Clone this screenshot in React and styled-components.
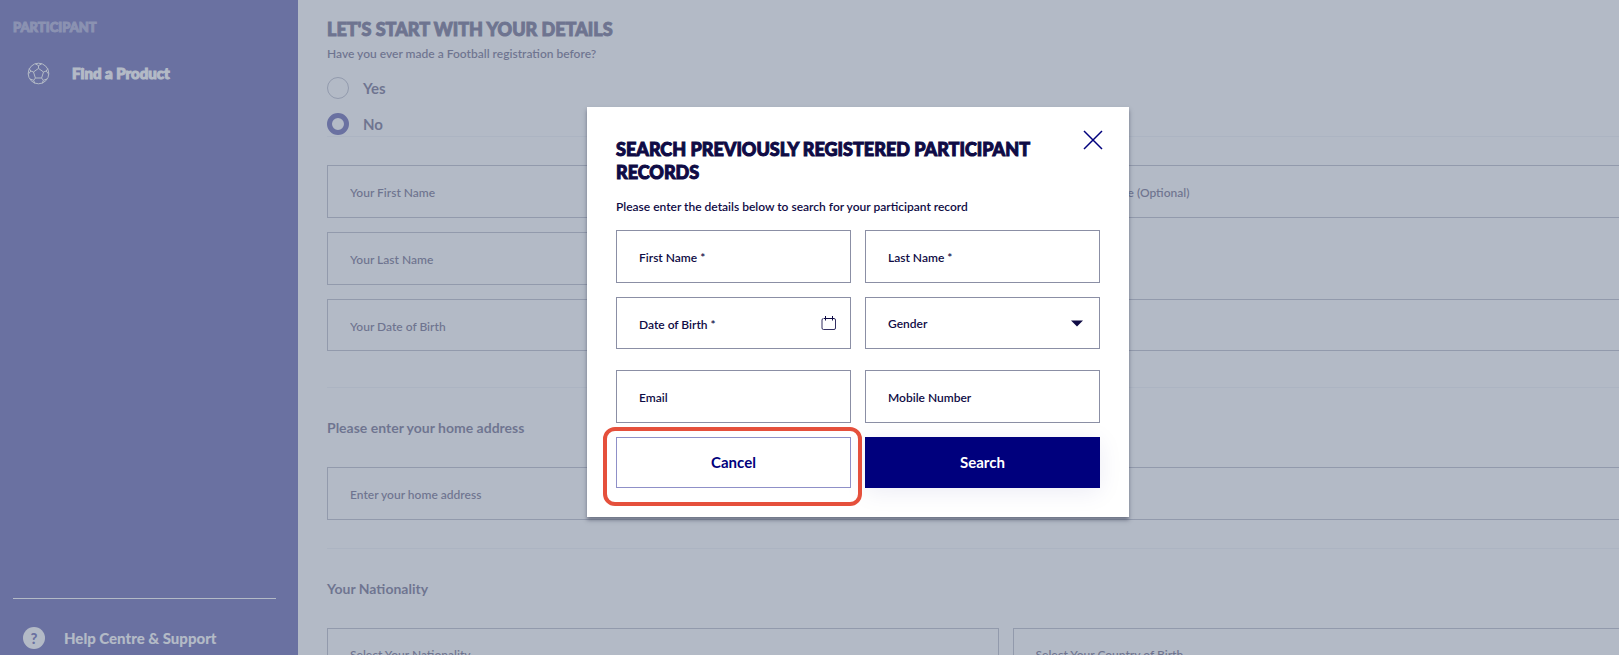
import React from "react";
import styled, { createGlobalStyle } from "styled-components";

const GlobalStyle = createGlobalStyle`
  * {
    box-sizing: border-box;
  }
  body {
    margin: 0;
    font-family: Lato, "Open Sans", sans-serif;
    font-size: 12px;
    color: #0f0b45;
  }
  input, select, button {
    font-family: inherit;
  }
`;

const Viewport = styled.div`
  height: 100vh;
  overflow: hidden;
`;

// The registration page runs a little past the right side of the window
const Page = styled.div`
  position: relative;
  display: flex;
  width: calc(100% + 97px);
  height: 100%;
  overflow: hidden;
  background: #fdfdff;
`;

const Sidebar = styled.nav`
  flex: 0 0 298px;
  display: flex;
  flex-direction: column;
  justify-content: space-between;
  padding: 18px 22px 5px 13px;
  background: #00007d;
`;

const SidebarTitle = styled.p`
  margin: 0 0 25px;
  font-size: 13px;
  line-height: 18px;
  font-weight: 900;
  color: #7374b7;
  -webkit-text-stroke: 1px currentColor;
`;

const SidebarLink = styled.a`
  display: flex;
  align-items: center;
  gap: ${(props) => props.$gap};
  padding-left: ${(props) => props.$indent};
  font-size: 15px;
  font-weight: 900;
  line-height: 24px;
  color: #fff;
  text-decoration: none;
`;

const HeavyText = styled.span`
  -webkit-text-stroke: 1px currentColor;
`;

const SidebarFooter = styled.div`
  padding-top: 27px;
  border-top: 1px solid #fff;
`;

const HelpBadge = styled.span`
  width: 22px;
  height: 22px;
  border-radius: 50%;
  background: #fff;
  color: #00007d;
  font-size: 15px;
  line-height: 22px;
  text-align: center;
`;

const Main = styled.main`
  flex: 1;
  min-width: 0;
  padding: 18px 32px 0 29px;
`;

const PageTitle = styled.h1`
  margin: 0;
  font-size: 18px;
  line-height: 22px;
  font-weight: 900;
  -webkit-text-stroke: 1px currentColor;
`;

const Question = styled.p`
  margin: 4px 0 12px;
  font-size: 12px;
  font-weight: 600;
  line-height: 20px;
`;

const RadioLabel = styled.label`
  display: flex;
  align-items: center;
  gap: 14px;
  height: 24px;
  margin-bottom: ${(props) => (props.$last ? "0" : "12px")};
  font-size: 15px;
  font-weight: 700;
`;

const Radio = styled.input`
  appearance: none;
  width: 22px;
  height: 22px;
  margin: 0;
  border: 1px solid #8b8fa5;
  border-radius: 50%;
  &:checked {
    border: 5px solid #00007d;
  }
`;

const Divider = styled.hr`
  margin: 0;
  border: 0;
  border-top: 1px solid #e6e8f0;
`;

const SectionTitle = styled.h2`
  margin: 28px 0;
  font-size: 14px;
  line-height: 23px;
  font-weight: 700;
`;

const Grid = styled.div`
  display: grid;
  grid-template-columns: repeat(2, minmax(0, 1fr));
  gap: 14px;
  padding: ${(props) => props.$padding || "0"};
`;

const Field = styled.div`
  display: flex;
  align-items: center;
  height: ${(props) => (props.$short ? "52px" : "53px")};
  border: 1px solid #8b8fa5;
  background: #fff;
  grid-column: ${(props) => (props.$wide ? "1 / -1" : props.$first ? "1" : "auto")};
  padding-right: ${(props) => (props.$icon ? "14px" : "0")};
`;

const Input = styled.input`
  flex: 1;
  min-width: 0;
  height: 100%;
  padding: 2px 22px 0;
  border: 0;
  outline: 0;
  background: none;
  font-size: 12px;
  font-weight: 600;
  color: inherit;
  &::placeholder {
    color: #0f0b45;
    opacity: 1;
  }
`;

const Select = styled.select`
  flex: 1;
  min-width: 0;
  height: 100%;
  padding: 0 22px;
  border: 0;
  outline: 0;
  appearance: none;
  background: none;
  font-size: 12px;
  font-weight: 600;
  color: inherit;
`;

const Overlay = styled.div`
  position: absolute;
  inset: 0;
  display: flex;
  justify-content: center;
  align-items: flex-start;
  padding-top: 107px;
  background: rgba(148, 158, 175, 0.714);
`;

const Dialog = styled.section`
  width: 542px;
  padding: 23px 29px 29px;
  background: #fff;
  box-shadow: 0 3px 4px rgba(40, 45, 70, 0.5);
`;

const DialogHeader = styled.header`
  display: flex;
  align-items: flex-start;
  justify-content: space-between;
  margin-right: -3px;
`;

const DialogTitle = styled.h2`
  max-width: 430px;
  margin: 8px 0 0;
  font-size: 18px;
  line-height: 23px;
  font-weight: 900;
  -webkit-text-stroke: 1px currentColor;
`;

const CloseButton = styled.button`
  display: flex;
  margin: 0;
  padding: 0;
  border: 0;
  background: none;
  color: #00007d;
`;

const DialogText = styled.p`
  margin: 12px 0;
  font-size: 12px;
  font-weight: 600;
  line-height: 22px;
`;

const Button = styled.button`
  width: 100%;
  height: 51px;
  padding: 0 0 2px;
  border: 1px solid ${(props) => (props.$primary ? "#00007d" : "#8f90c8")};
  background: ${(props) => (props.$primary ? "#00007d" : "#fff")};
  color: ${(props) => (props.$primary ? "#fff" : "#00007d")};
  box-shadow: ${(props) => (props.$primary ? "0 4px 24px rgba(0, 0, 125, 0.08)" : "none")};
  font-size: 15px;
  font-weight: 700;
`;

const Highlight = styled.div`
  position: relative;
  z-index: 1;
  &::after {
    content: "";
    position: absolute;
    inset: -10px -11px -18px -13px;
    border: 4px solid #e5503c;
    border-radius: 12px;
    pointer-events: none;
  }
`;

function BallIcon() {
  return (
    <svg width="23" height="23" viewBox="0 0 23 23" fill="none" stroke="currentColor" strokeWidth="1">
      <circle cx="11.5" cy="11.5" r="10.3" />
      <path d="M11.5 6.4l5 3.6-1.9 6H8.4l-1.9-6z" />
      <path d="M11.5 6.4V3.6M8.3 1.8l3.2 1.8 3.2-1.8M16.5 10l2.7-1M20.9 6.6l-1.7 2.4 2.5 3.2M14.6 16l1.7 2.3M20.1 17l-3.8 1.3-1 3M8.4 16l-1.7 2.3M2.9 17l3.8 1.3 1 3M6.5 10L3.8 9M2.1 6.6L3.8 9l-2.5 3.2" />
    </svg>
  );
}

function CalendarIcon() {
  return (
    <svg width="15" height="15" viewBox="0 0 15 15" fill="none" stroke="currentColor">
      <path d="M4.5 0v4.5M11.5 0v4.5M3 2.5h10" />
      <path d="M2.5 2.5Q1 2.5 1 4v8q0 1.5 1.5 1.5h10.5q1.5 0 1.5-1.5V4q0-1.5-1.5-1.5" strokeOpacity=".85" />
    </svg>
  );
}

function CaretIcon() {
  return (
    <svg width="15" height="7" viewBox="0 0 15 7" fill="currentColor">
      <path d="M1 .5h12L7 6.5z" />
    </svg>
  );
}

function CloseIcon() {
  return (
    <svg width="20" height="20" viewBox="0 0 20 20" fill="none" stroke="currentColor" strokeWidth="1.5">
      <path d="M1 1l18 18M19 1L1 19" />
    </svg>
  );
}

function TextField({ label, ...rest }) {
  return (
    <Field {...rest}>
      <Input type="text" placeholder={label} aria-label={label} />
    </Field>
  );
}

function SearchDialog() {
  return (
    <Dialog role="dialog" aria-labelledby="search-title">
      <DialogHeader>
        <DialogTitle id="search-title">
          SEARCH PREVIOUSLY REGISTERED PARTICIPANT RECORDS
        </DialogTitle>
        <CloseButton type="button" aria-label="Close">
          <CloseIcon />
        </CloseButton>
      </DialogHeader>
      <DialogText>
        Please enter the details below to search for your participant record
      </DialogText>
      <Grid>
        <TextField label="First Name *" />
        <TextField label="Last Name *" />
        <Field $icon $short>
          <Input type="text" placeholder="Date of Birth *" aria-label="Date of Birth" />
          <CalendarIcon />
        </Field>
        <Field $icon $short>
          <Select aria-label="Gender">
            <option>Gender</option>
          </Select>
          <CaretIcon />
        </Field>
      </Grid>
      <Grid $padding="21px 0 0">
        <TextField label="Email" />
        <TextField label="Mobile Number" />
        <Highlight>
          <Button type="button">Cancel</Button>
        </Highlight>
        <Button type="submit" $primary>
          Search
        </Button>
      </Grid>
    </Dialog>
  );
}

export default function App() {
  return (
    <Viewport>
      <GlobalStyle />
      <Page>
        <Sidebar>
          <div>
            <SidebarTitle>PARTICIPANT</SidebarTitle>
            <SidebarLink href="#products" $gap="22px" $indent="14px">
              <BallIcon />
              <HeavyText>Find a Product</HeavyText>
            </SidebarLink>
          </div>
          <SidebarFooter>
            <SidebarLink href="#help" $gap="19px" $indent="10px">
              <HelpBadge>?</HelpBadge>
              Help Centre &amp; Support
            </SidebarLink>
          </SidebarFooter>
        </Sidebar>
        <Main>
          <PageTitle>LET'S START WITH YOUR DETAILS</PageTitle>
          <Question>Have you ever made a Football registration before?</Question>
          <RadioLabel>
            <Radio type="radio" name="registered" />
            Yes
          </RadioLabel>
          <RadioLabel $last>
            <Radio type="radio" name="registered" defaultChecked />
            No
          </RadioLabel>
          <Divider />
          <Grid $padding="28px 0 36px">
            <TextField label="Your First Name" />
            <TextField label="Your Middle Name (Optional)" />
            <TextField label="Your Last Name" $first />
            <TextField label="Your Date of Birth" $first $short />
            <Field $short>
              <Select aria-label="Your gender" />
            </Field>
          </Grid>
          <Divider />
          <SectionTitle>Please enter your home address</SectionTitle>
          <Grid $padding="0 0 28px">
            <TextField label="Enter your home address" $wide />
          </Grid>
          <Divider />
          <SectionTitle>Your Nationality</SectionTitle>
          <Grid>
            <Field>
              <Select aria-label="Nationality">
                <option>Select Your Nationality</option>
              </Select>
            </Field>
            <Field>
              <Select aria-label="Country of birth">
                <option>Select Your Country of Birth</option>
              </Select>
            </Field>
          </Grid>
        </Main>
        <Overlay>
          <SearchDialog />
        </Overlay>
      </Page>
    </Viewport>
  );
}
